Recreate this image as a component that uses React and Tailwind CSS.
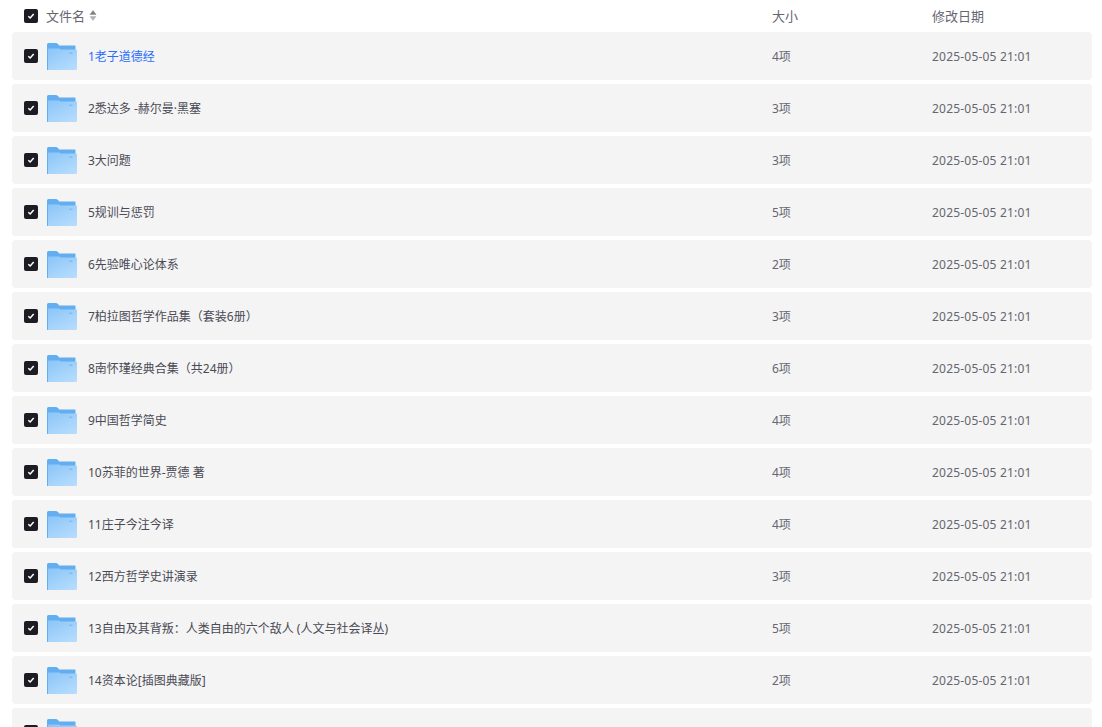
import React from 'react';

const files = [
  { name: '1老子道德经', size: '4项', active: true },
  { name: '2悉达多 -赫尔曼·黑塞', size: '3项' },
  { name: '3大问题', size: '3项' },
  { name: '5规训与惩罚', size: '5项' },
  { name: '6先验唯心论体系', size: '2项' },
  { name: '7柏拉图哲学作品集（套装6册）', size: '3项' },
  { name: '8南怀瑾经典合集（共24册）', size: '6项' },
  { name: '9中国哲学简史', size: '4项' },
  { name: '10苏菲的世界-贾德 著', size: '4项' },
  { name: '11庄子今注今译', size: '4项' },
  { name: '12西方哲学史讲演录', size: '3项' },
  { name: '13自由及其背叛：人类自由的六个敌人 (人文与社会译丛)', size: '5项' },
  { name: '14资本论[插图典藏版]', size: '2项' },
];

function Check() {
  return (
    <span className="w-[14px] h-[14px] rounded-[2px] bg-[#1c1c22] flex items-center justify-center shrink-0">
      <svg width="8" height="8" viewBox="0 0 8 8" fill="none">
        <path d="M1.3 4.2 L3.2 6 L6.7 2.1" stroke="#fff" strokeWidth="1.5" />
      </svg>
    </span>
  );
}

function Folder() {
  return (
    <svg width="30" height="27" viewBox="0 0 30 27" className="block shrink-0">
      <defs>
        <linearGradient id="folderFront" x1="0.1" y1="0" x2="0.8" y2="1">
          <stop offset="0" stopColor="#8cc6f8" />
          <stop offset="1" stopColor="#b5dcfd" />
        </linearGradient>
      </defs>
      <path d="M0 1.5 Q0 0 1.5 0 H9 Q10.5 0 11.5 1.5 L12 2.5 H28 Q28.5 2.5 28.5 3.5 V8 H0 Z" fill="#62aef0" />
      <path d="M0 5.5 H12 L14 6.5 H29 Q30 6.5 30 7.5 V26 Q30 27 29 27 H1 Q0 27 0 26 Z" fill="url(#folderFront)" />
      <rect x="0" y="5.5" width="1" height="21.5" fill="#62aef0" />
      <rect x="22" y="9.5" width="3.5" height="1.5" fill="#7fbdf3" />
    </svg>
  );
}

function Row({ file }) {
  return (
    <div className="h-12 shrink-0 flex items-center bg-[#f4f4f4] rounded-[4px]">
      <div className="w-[760px] flex items-center pl-3">
        <Check />
        <span className="ml-[9px]"><Folder /></span>
        {file && (
          <span className={file.active ? 'ml-[11px] pt-px text-[#2b6cff]' : 'ml-[11px] pt-px text-[#4a4a55]'}>{file.name}</span>
        )}
      </div>
      {file && <div className="w-40 pt-px">{file.size}</div>}
      {file && <div className="pt-px tracking-[0.2px]">2025-05-05 21:01</div>}
    </div>
  );
}

export default function App() {
  return (
    <div className="h-[727px] overflow-hidden bg-white pl-3 pr-[10px] font-['Noto_Sans','Noto_Sans_CJK_SC',sans-serif] text-xs text-[#666670]">
      <div className="h-8 flex items-center text-[13px] text-[#666670]">
        <div className="w-[760px] flex items-center pl-3">
          <Check />
          <span className="ml-2 pt-px">文件名</span>
          <svg width="8" height="11" viewBox="0 0 8 11" className="ml-[4px]">
            <path d="M4 0.5 L7 4.5 H1 Z" fill="#808080" stroke="#808080" strokeWidth="0.5" strokeLinejoin="round" />
            <path d="M4 10.5 L7 6.5 H1 Z" fill="#b0b0b0" stroke="#b0b0b0" strokeWidth="0.5" strokeLinejoin="round" />
          </svg>
        </div>
        <div className="w-40 pt-px">大小</div>
        <div className="pt-px">修改日期</div>
      </div>
      <div className="flex flex-col gap-1">
        {files.map((file) => (
          <Row key={file.name} file={file} />
        ))}
        <Row />
      </div>
    </div>
  );
}
